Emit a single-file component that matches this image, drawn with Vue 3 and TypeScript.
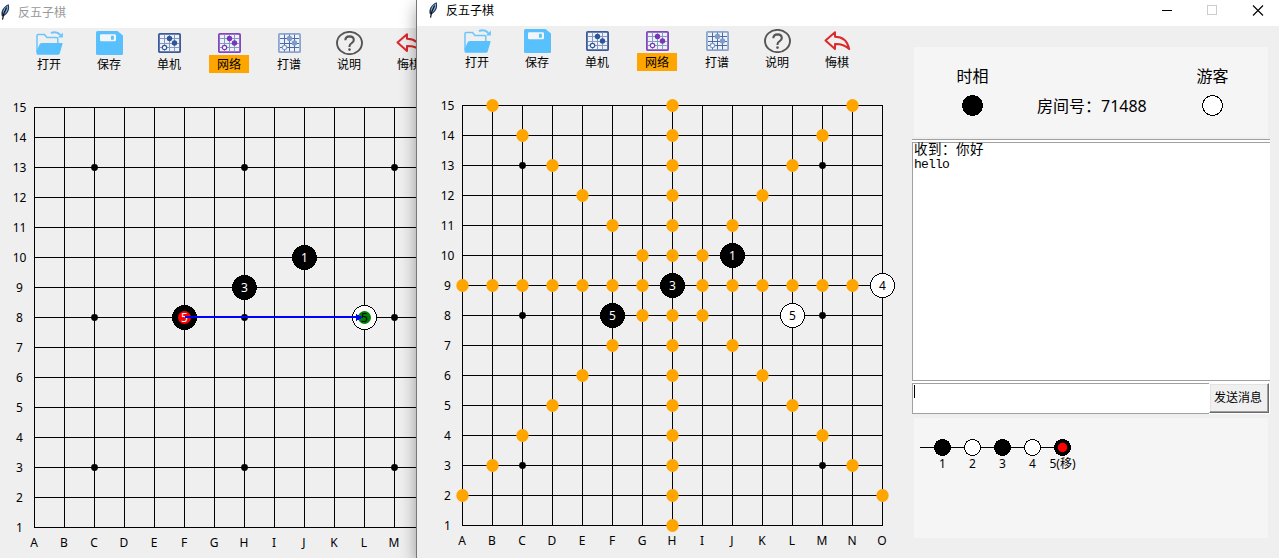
<script setup lang="ts">
interface Stone {
  at: string
  color: 'black' | 'white'
  label: string
  mark?: 'red' | 'green'
}

interface GameWindow {
  id: string
  active: boolean
  stones: Stone[]
  hints: string[]
  move?: { from: string; to: string }
}

type IconName = 'open' | 'save' | 'grid' | 'help' | 'undo'

interface Tool {
  label: string
  icon: IconName
  line?: string
  frame?: string
  dot?: string
  selected?: boolean
}

const CELL = 30
const LEFT = 45
const TOP = 25
const columns = 'ABCDEFGHIJKLMNO'.split('')
const rows = Array.from({ length: 15 }, (_, i) => 15 - i)
const stars = ['C13', 'H13', 'M13', 'C8', 'H8', 'M8', 'C3', 'H3', 'M3']

const px = (at: string) => LEFT + columns.indexOf(at[0]) * CELL + 0.5
const py = (at: string) => TOP + (15 - Number(at.slice(1))) * CELL + 0.5

const tools: Tool[] = [
  { label: '打开', icon: 'open' },
  { label: '保存', icon: 'save' },
  { label: '单机', icon: 'grid', frame: '#3b5a9a', line: '#8397c0', dot: '#2f5597' },
  { label: '网络', icon: 'grid', frame: '#8246bd', line: '#7f9cc4', dot: '#7a35b8', selected: true },
  { label: '打谱', icon: 'grid', frame: '#8ba5cd', line: '#4a6aa8', dot: '#7f9bc9' },
  { label: '说明', icon: 'help' },
  { label: '悔棋', icon: 'undo' },
]

const hintRows: Record<number, string> = {
  15: 'BHN', 14: 'CHM', 13: 'DHL', 12: 'EHK', 11: 'FHJ', 10: 'GHI', 9: 'ABCDEFGIJKLMN',
  8: 'GHI', 7: 'FHJ', 6: 'EHK', 5: 'DHL', 4: 'CHM', 3: 'BHN', 2: 'AHO', 1: 'H',
}
const hints = Object.entries(hintRows).flatMap(([row, cols]) => cols.split('').map((c) => c + row))

const windows: GameWindow[] = [
  {
    id: 'back',
    active: false,
    hints: [],
    stones: [
      { at: 'J10', color: 'black', label: '1' },
      { at: 'H9', color: 'black', label: '3' },
      { at: 'F8', color: 'black', label: '5', mark: 'red' },
      { at: 'L8', color: 'white', label: '5', mark: 'green' },
    ],
    move: { from: 'F8', to: 'L8' },
  },
  {
    id: 'front',
    active: true,
    hints,
    stones: [
      { at: 'J10', color: 'black', label: '1' },
      { at: 'H9', color: 'black', label: '3' },
      { at: 'F8', color: 'black', label: '5' },
      { at: 'L8', color: 'white', label: '5' },
      { at: 'O9', color: 'white', label: '4' },
    ],
  },
]

const steps = ['1', '2', '3', '4', '5(移)']
const messages = ['收到：你好', 'hello']
</script>

<template>
  <main class="desktop">
    <section v-for="w in windows" :key="w.id" class="window" :class="w.id">
      <header class="titlebar">
        <svg class="feather" width="10" height="16" viewBox="0 0 10 16">
          <path d="M2 12.500C.2 8.500 2.500 2.800 8.600.3c1.300 3.300.3 8.900-4.200 11.400z" fill="#22324f" />
          <path d="M3 9.800C2.600 6 4.800 3 8 1.500 8.600 5 7 8.600 4.200 10.400z" fill="#7aaee0" />
          <path d="M6.600 3.400 3.800 9.800 2.500 15.600" fill="none" stroke="#111" stroke-width="1.200" />
        </svg>
        <span class="title">反五子棋</span>
        <svg v-if="w.active" class="controls" width="112" height="20" viewBox="0 0 112 20" fill="none">
          <path d="M5 10.500h10" stroke="#000" />
          <rect x="50.500" y="5.500" width="9" height="9" stroke="#ccc" />
          <path d="M96 5.500l10 10M106 5.500l-10 10" stroke="#000" stroke-width="1.100" />
        </svg>
      </header>

      <div class="content">
        <div class="game">
          <nav class="toolbar">
            <div v-for="t in tools" :key="t.label" class="tool">
              <svg width="27" height="24" viewBox="0 0 27 24">
                <template v-if="t.icon === 'open'">
                  <path d="M1 21V4.500q0-1 1-1h6.500l2.500 3h9.500q1.300 0 1.300 1.300V12" fill="none" stroke="#6cc5fb" stroke-width="1.500" />
                  <path d="M6 12H25.800q1 0 .7 1l-2.800 9.500q-.4 1.300-1.700 1.300H2q-1.500 0-1.500-1.300V20l3.300-7q.5-1 2.200-1z" fill="#58c0fc" />
                  <path d="M15 2q5.500-2.400 9.300 2" fill="none" stroke="#6cc5fb" stroke-width="2" />
                  <path d="M26.900 1.500v5h-5z" fill="#6cc5fb" />
                </template>
                <template v-else-if="t.icon === 'save'">
                  <path d="M1.500 0H21.500L27 4.500V22.500Q27 24 25.500 24H1.500Q0 24 0 22.500V1.500Q0 0 1.500 0z" fill="#58c0fc" />
                  <rect x="4" y="3.300" width="16" height="7" rx="1.200" fill="#f2f6f8" />
                  <rect x="15" y="4.700" width="2.800" height="4" rx=".5" fill="#58c0fc" />
                </template>
                <template v-else-if="t.icon === 'grid'">
                  <rect x="2.900" y="2.800" width="21.200" height="18.400" rx="1" fill="#eef2f8" :stroke="t.frame" stroke-width="1.800" />
                  <path d="M8.500 3.500v17M13.500 3.500v17M18.500 3.500v17M4 7.500h19M4 12.500h19M4 16.500h19" fill="none" :stroke="t.line" stroke-width="1" />
                  <circle cx="13.500" cy="7.500" r="2.700" :fill="t.dot" />
                  <circle cx="18.500" cy="12" r="2.700" :fill="t.dot" />
                  <circle cx="8.500" cy="16.500" r="2.200" fill="#fff" :stroke="t.dot" stroke-width="1.200" />
                </template>
                <template v-else-if="t.icon === 'help'">
                  <ellipse cx="13.500" cy="12" rx="12.500" ry="11.100" fill="none" stroke="#555" stroke-width="1.900" />
                  <path d="M9.300 9.300q.2-3.900 4.200-3.900 4.300.1 4.300 3.600 0 2-2.400 3.400-1.900 1-1.900 3v.6" fill="none" stroke="#555" stroke-width="2.100" />
                  <circle cx="13.500" cy="18.600" r="1.300" fill="#555" />
                </template>
                <path v-else d="M1.500 11.500 11 3.200v4.600q11.500 0 14.200 12.300-5.600-5.300-14.200-5v5z" fill="none" stroke="#db2a2c" stroke-width="2" stroke-linejoin="round" />
              </svg>
              <span class="tool-label" :class="{ selected: t.selected }">{{ t.label }}</span>
            </div>
          </nav>

          <svg class="board" width="495" height="478" viewBox="0 0 495 478">
            <g class="crisp">
              <path v-for="c in columns" :key="c" class="line" :d="`M${px(c + '15')} ${TOP}V${TOP + 421}`" />
              <path v-for="r in rows" :key="r" class="line" :d="`M${LEFT} ${py('A' + r)}H${LEFT + 421}`" />
            </g>
            <circle v-for="s in stars" :key="s" :cx="px(s)" :cy="py(s)" r="3.400" />
            <ellipse v-for="h in w.hints" :key="h" class="hint" :cx="px(h)" :cy="py(h)" rx="6.200" ry="6.400" />
            <g class="caption">
              <text v-for="r in rows" :key="r" x="30.500" :y="py('A' + r) + 4.500">{{ r }}</text>
              <text v-for="c in columns" :key="c" :x="px(c + '1') - 0.500" y="465">{{ c }}</text>
            </g>
            <g v-for="s in w.stones" :key="s.at">
              <circle class="stone crisp" :class="s.color" :cx="px(s.at)" :cy="py(s.at)" r="12" />
              <circle v-if="s.mark" :class="s.mark" :cx="px(s.at)" :cy="py(s.at)" r="6.500" />
              <text class="stone-label" :class="s.color" :x="px(s.at)" :y="py(s.at) + 4.500">{{ s.label }}</text>
            </g>
            <g v-if="w.move" class="crisp move">
              <path :d="`M${px(w.move.from)} ${py(w.move.from) - 0.500}H${px(w.move.to) - 5}`" stroke-width="2" />
              <path :d="`M${px(w.move.to) - 1} ${py(w.move.to)}l-8 -3.500v7z`" stroke="none" />
            </g>
          </svg>
        </div>

        <aside v-if="w.active" class="side">
          <div class="players">
            <div class="player"><span>时相</span><svg width="21" height="21"><circle class="crisp stone black" cx="10.500" cy="10.500" r="10" /></svg></div>
            <div class="room">房间号：71488</div>
            <div class="player"><span>游客</span><svg width="21" height="21"><circle class="crisp stone white" cx="10.500" cy="10.500" r="10" /></svg></div>
          </div>
          <div class="chat">
            <div class="log"><p v-for="m in messages" :key="m">{{ m }}</p></div>
            <div class="compose">
              <div class="entry"><i class="caret"></i></div>
              <button class="send">发送消息</button>
            </div>
          </div>
          <svg class="history" width="354" height="120" viewBox="0 0 354 120">
            <path class="line crisp" d="M6 29.500H148" />
            <g v-for="(s, i) in steps" :key="s">
              <circle class="stone crisp" :class="i % 2 ? 'white' : 'black'" :cx="28.500 + i * 30" cy="29.500" r="8" />
              <circle v-if="i === 4" class="red" :cx="28.500 + i * 30" cy="29.500" r="4.700" />
              <text class="step" :x="28.500 + i * 30" y="50">{{ s }}</text>
            </g>
          </svg>
        </aside>
      </div>
    </section>
  </main>
</template>

<style>
body {
  margin: 0;
}
</style>

<style scoped>
.desktop {
  position: relative;
  width: 1279px;
  height: 558px;
  overflow: hidden;
  background: #efefef;
  font-family: "Noto Sans", "Noto Sans CJK SC", sans-serif;
  font-size: 12px;
  color: #000;
}
.window {
  position: absolute;
  top: 0;
  height: 558px;
  width: 862px;
  background: #efefef;
}
.back {
  left: -11px;
}
.front {
  left: 417px;
  box-shadow: -1px 0 0 #777, 0 6px 16px rgba(0, 0, 0, 0.42);
}
.titlebar {
  display: flex;
  align-items: flex-start;
  height: 26px;
  box-sizing: border-box;
  padding: 2px 0 0 11px;
  background: #fff;
}
.back .titlebar {
  height: 28px;
  padding-top: 4px;
}
.title {
  margin-left: 8px;
  line-height: 15px;
  font-family: "Noto Sans CJK SC", sans-serif;
}
.back .title {
  color: #999;
}
.controls {
  margin: -2px 10px 0 auto;
}
.content {
  display: flex;
}
.game {
  width: 495px;
  flex: none;
}
.toolbar {
  display: flex;
  height: 54px;
  box-sizing: border-box;
  padding: 3px 0 0 30px;
}
.tool {
  display: flex;
  flex-direction: column;
  align-items: center;
  flex: none;
  width: 60px;
}
.tool svg {
  display: block;
}
.tool-label {
  width: 40px;
  height: 18px;
  line-height: 18px;
  text-align: center;
  font-family: "Noto Sans CJK SC", sans-serif;
}
.selected {
  background: #ffa500;
}
.board {
  display: block;
}
.crisp {
  shape-rendering: crispEdges;
}
.line {
  stroke: #000;
  stroke-width: 1;
  fill: none;
}
.hint {
  fill: #ffa500;
}
.caption,
.stone-label,
.step {
  text-anchor: middle;
}
.stone {
  stroke: #000;
  stroke-width: 1;
}
.black {
  fill: #000;
}
.white {
  fill: #fff;
}
.stone-label.black {
  fill: #fff;
}
.stone-label.white {
  fill: #000;
}
.red {
  fill: #f00;
}
.green {
  fill: #008000;
}
.move {
  stroke: #00f;
  fill: #00f;
}
.side {
  width: 358px;
  padding-top: 21px;
}
.players {
  display: grid;
  grid-template-columns: 117px 126px 111px;
  width: 354px;
  height: 90px;
  margin-left: 2px;
  background: #f5f5f5;
  font-size: 16px;
  line-height: 20px;
}
.player {
  display: flex;
  flex-direction: column;
  align-items: center;
  padding-top: 19px;
}
.player span {
  margin-bottom: 9px;
}
.player svg {
  display: block;
}
.room {
  padding: 49px 0 0 6px;
  white-space: nowrap;
}
.chat {
  margin-top: 2px;
  border-top: 1px solid #a0a0a0;
  background: #fff;
}
.log {
  height: 237px;
  margin-top: 2px;
  border: 1px solid #a0a0a0;
  border-right: 0;
  padding-left: 1px;
  font-family: "Liberation Mono", "Noto Sans CJK SC", monospace;
  line-height: 14px;
}
.log p {
  margin: 0;
  height: 14px;
}
.log p:first-child {
  font-size: 13.500px;
  letter-spacing: 0.500px;
  line-height: 16px;
}
.log p:last-child {
  font-size: 13px;
  letter-spacing: -0.800px;
  line-height: 15px;
}
.compose {
  display: flex;
  height: 33px;
  padding-top: 2px;
  box-sizing: border-box;
}
.entry {
  width: 297px;
  box-sizing: border-box;
  height: 31px;
  border: 1px solid #a0a0a0;
  border-right: 0;
  padding: 1px;
}
.caret {
  display: block;
  width: 1px;
  height: 13px;
  background: #000;
}
.send {
  width: 60px;
  height: 30px;
  padding: 0 2px 3px 0;
  border: 1px solid;
  border-color: #fff #696969 #696969 #fff;
  box-shadow: inset -1px -1px 0 #a0a0a0, inset 1px 1px 0 #e3e3e3;
  background: #f0f0f0;
  font: 12px "Noto Sans CJK SC", sans-serif;
  color: #000;
  white-space: nowrap;
}
.history {
  display: block;
  margin: 4px 0 0 2px;
  background: #f5f5f5;
}
</style>
